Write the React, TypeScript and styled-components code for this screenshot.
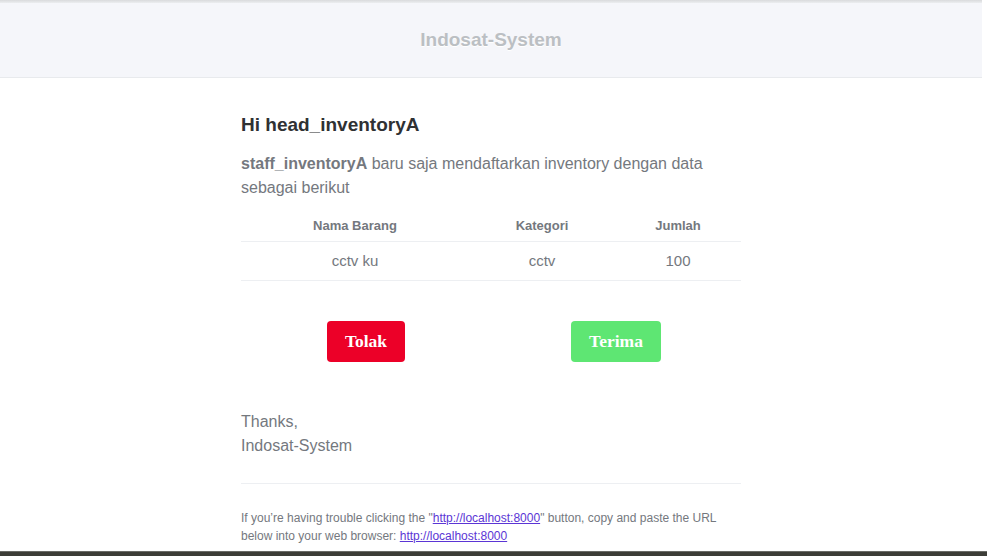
import React from 'react';
import styled, { createGlobalStyle } from 'styled-components';

const GlobalStyle = createGlobalStyle`
    html, body {
        margin: 0;
        padding: 0;
        background: #ffffff;
    }
    body {
        font-family: "Liberation Sans", Arial, Helvetica, sans-serif;
        -webkit-font-smoothing: antialiased;
    }
`;

const items = [
    { nama: 'cctv ku', kategori: 'cctv', jumlah: 100 },
];

const App = () => {
    return (
        <>
            <GlobalStyle />
            <Wrapper>
                <TopEdge />
                <Header>
                    <HeaderLink href="#">Indosat-System</HeaderLink>
                </Header>
                <Body>
                    <Inner>
                        <Greeting>Hi head_inventoryA</Greeting>
                        <Paragraph>
                            <Strong>staff_inventoryA</Strong> baru saja mendaftarkan inventory dengan data sebagai berikut
                        </Paragraph>
                        <Table>
                            <colgroup>
                                <col style={{ width: '228px' }} />
                                <col style={{ width: '146px' }} />
                                <col style={{ width: '126px' }} />
                            </colgroup>
                            <thead>
                                <tr>
                                    <Th>Nama Barang</Th>
                                    <Th>Kategori</Th>
                                    <Th>Jumlah</Th>
                                </tr>
                            </thead>
                            <tbody>
                                {items.map((item) => (
                                    <tr key={item.nama}>
                                        <Td>{item.nama}</Td>
                                        <Td>{item.kategori}</Td>
                                        <Td>{item.jumlah}</Td>
                                    </tr>
                                ))}
                            </tbody>
                        </Table>
                        <ActionRow>
                            <ActionCell>
                                <ActionButton href="#" $color="#ec0028">Tolak</ActionButton>
                            </ActionCell>
                            <ActionCell>
                                <ActionButton href="#" $color="#5ee673">Terima</ActionButton>
                            </ActionCell>
                        </ActionRow>
                        <Signature>
                            Thanks,<br />
                            Indosat-System
                        </Signature>
                        <Subcopy>
                            If you’re having trouble clicking the "<Link href="#">http://localhost:8000</Link>" button, copy and paste the URL below into your web browser: <Link href="#">http://localhost:8000</Link>
                        </Subcopy>
                    </Inner>
                </Body>
            </Wrapper>
            <BottomEdge />
        </>
    );
};

const Wrapper = styled.div`
    width: 982px;
    background: #ffffff;
`;

const TopEdge = styled.div`
    height: 3px;
    background: linear-gradient(#d9dadc, #eceef0);
`;

const Header = styled.div`
    background: #f5f6fa;
    padding: 25px 0;
    text-align: center;
    border-bottom: 1px solid #e8eaed;
`;

const HeaderLink = styled.a`
    color: #bbbfc3;
    font-size: 19px;
    font-weight: bold;
    line-height: 24px;
    text-decoration: none;
    text-shadow: 0 1px 0 #ffffff;
`;

const Body = styled.div`
    display: flex;
    justify-content: center;
`;

const Inner = styled.div`
    width: 500px;
    padding: 36px 35px 0;
`;

const Greeting = styled.h1`
    margin: 0 0 16px;
    color: #2f3133;
    font-size: 19px;
    font-weight: bold;
    line-height: 22px;
`;

const Paragraph = styled.p`
    margin: 0;
    color: #74787e;
    font-size: 16px;
    line-height: 24px;
`;

const Strong = styled.strong`
    font-weight: bold;
`;

const Table = styled.table`
    width: 100%;
    margin-top: 18px;
    border-collapse: collapse;
    table-layout: fixed;
`;

const Th = styled.th`
    padding: 0 0 8px;
    border-bottom: 1px solid #edeff2;
    color: #74787e;
    font-size: 13px;
    font-weight: bold;
    line-height: 15px;
    text-align: center;
`;

const Td = styled.td`
    padding: 10px 0;
    border-bottom: 1px solid #edeff2;
    color: #74787e;
    font-size: 15px;
    line-height: 18px;
    text-align: center;
`;

const ActionRow = styled.div`
    display: grid;
    grid-template-columns: 1fr 1fr;
    margin-top: 40px;
`;

const ActionCell = styled.div`
    display: flex;
    justify-content: center;
`;

const ActionButton = styled.a<{ $color: string }>`
    display: inline-block;
    padding: 10px 18px;
    border-radius: 4px;
    background: ${(p) => p.$color};
    color: #ffffff;
    font-family: "Liberation Serif", "Times New Roman", serif;
    font-size: 17.5px;
    font-weight: bold;
    line-height: 21px;
    text-decoration: none;
`;

const Signature = styled.p`
    margin: 48px 0 0;
    color: #74787e;
    font-size: 16px;
    line-height: 24px;
`;

const Subcopy = styled.p`
    margin: 25px 0 0;
    padding-top: 25px;
    border-top: 1px solid #edeff2;
    color: #74787e;
    font-size: 12px;
    line-height: 18px;
`;

const Link = styled.a`
    color: #5b35d5;
    text-decoration: underline;
`;

const BottomEdge = styled.div`
    position: fixed;
    left: 0;
    right: 0;
    bottom: 0;
    height: 4px;
    background: #3c3d37;
    border-top: 1px solid #6a6b66;
`;

export default App;
